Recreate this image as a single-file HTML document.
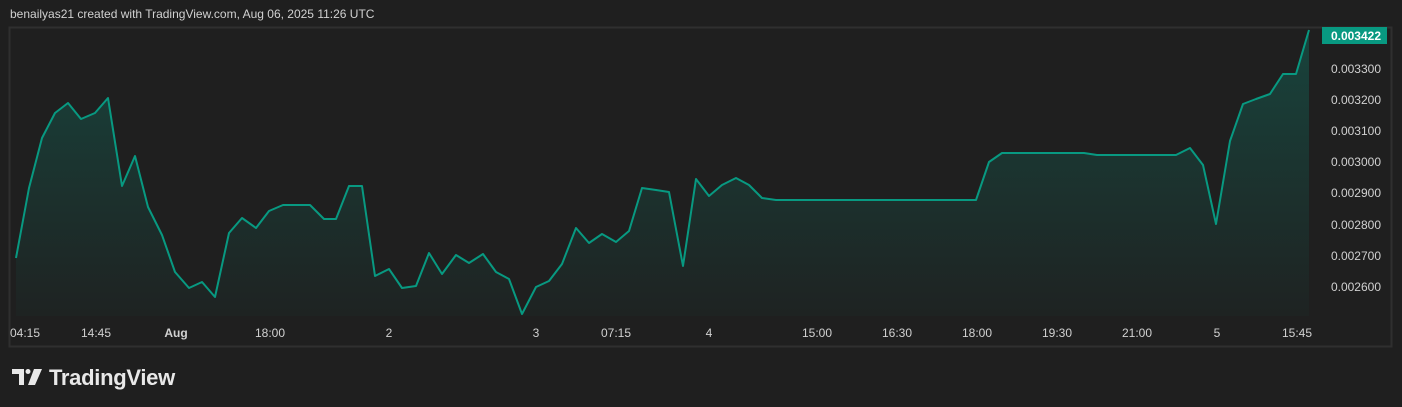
<!DOCTYPE html>
<html><head><meta charset="utf-8"><style>
html,body{margin:0;padding:0;background:#1f1f1f;width:1402px;height:407px;overflow:hidden;font-family:"Liberation Sans",sans-serif}
</style></head><body>
<svg width="1402" height="407" xmlns="http://www.w3.org/2000/svg" style="position:absolute;left:0;top:0">
<defs><linearGradient id="g" x1="0" y1="0" x2="0" y2="1">
<stop offset="0" stop-color="#089981" stop-opacity="0.3"/>
<stop offset="1" stop-color="#089981" stop-opacity="0.03"/></linearGradient></defs>
<text x="10" y="18" fill="#d1d1d1" font-size="12">benailyas21 created with TradingView.com, Aug 06, 2025 11:26 UTC</text>
<rect x="9.5" y="27.5" width="1382" height="319" fill="none" stroke="#2f2f2f" stroke-width="2"/>
<path d="M16,258 L29,188 42,138 55,113 68,103 81,119 95,113 108,98 122,186 135,156 148,207 162,235 175,272 189,288 202,282 215,297 229,233 242,218 256,228 269,211 283,205 310,205 324,219 336,219 349,186 362,186 375,276 389,269 402,288 416,286 429,253 442,274 456,255 469,263 483,254 496,272 509,279 522,314 536,287 549,281 562,264 576,228 589,243 602,234 616,242 629,231 642,188 656,190 669,192 683,266 696,179 709,196 722,185 736,178 749,185 762,198 776,200 976,200 989,162 1002,153 1084,153 1097,155 1176,155 1190,148 1203,165 1216,224 1230,141 1243,104 1256,99 1270,94 1283,74 1296,74 1309,30 L1309,316 L16,316 Z" fill="url(#g)"/>
<polyline points="16,258 29,188 42,138 55,113 68,103 81,119 95,113 108,98 122,186 135,156 148,207 162,235 175,272 189,288 202,282 215,297 229,233 242,218 256,228 269,211 283,205 310,205 324,219 336,219 349,186 362,186 375,276 389,269 402,288 416,286 429,253 442,274 456,255 469,263 483,254 496,272 509,279 522,314 536,287 549,281 562,264 576,228 589,243 602,234 616,242 629,231 642,188 656,190 669,192 683,266 696,179 709,196 722,185 736,178 749,185 762,198 776,200 976,200 989,162 1002,153 1084,153 1097,155 1176,155 1190,148 1203,165 1216,224 1230,141 1243,104 1256,99 1270,94 1283,74 1296,74 1309,30" fill="none" stroke="#089981" stroke-width="2" stroke-linejoin="round"/>
<rect x="1322" y="27" width="65" height="17" fill="#089981"/>
<g font-size="12" fill="#d1d1d1" text-anchor="end">
<text x="1381" y="40" fill="#fff" font-weight="bold">0.003422</text>
<text x="1381" y="73">0.003300</text>
<text x="1381" y="104">0.003200</text>
<text x="1381" y="135">0.003100</text>
<text x="1381" y="166">0.003000</text>
<text x="1381" y="197">0.002900</text>
<text x="1381" y="229">0.002800</text>
<text x="1381" y="260">0.002700</text>
<text x="1381" y="291">0.002600</text>
</g>
<g font-size="12" fill="#d1d1d1" text-anchor="middle">
<text x="25" y="337">04:15</text>
<text x="96" y="337">14:45</text>
<text x="176" y="337" font-weight="bold">Aug</text>
<text x="270" y="337">18:00</text>
<text x="389" y="337">2</text>
<text x="536" y="337">3</text>
<text x="616" y="337">07:15</text>
<text x="709" y="337">4</text>
<text x="817" y="337">15:00</text>
<text x="897" y="337">16:30</text>
<text x="977" y="337">18:00</text>
<text x="1057" y="337">19:30</text>
<text x="1137" y="337">21:00</text>
<text x="1217" y="337">5</text>
<text x="1297" y="337">15:45</text>
</g>
<g fill="#e8e8e8">
<path d="M12,369 H24 V385 H19 V374 H12 Z"/>
<circle cx="28" cy="371.5" r="2.5"/>
<path d="M34,369 H42 L35,385 H28 Z"/>
</g>
<text x="49" y="385" fill="#e8e8e8" font-size="22" font-weight="bold" letter-spacing="-0.3">TradingView</text>
</svg>
</body></html>
